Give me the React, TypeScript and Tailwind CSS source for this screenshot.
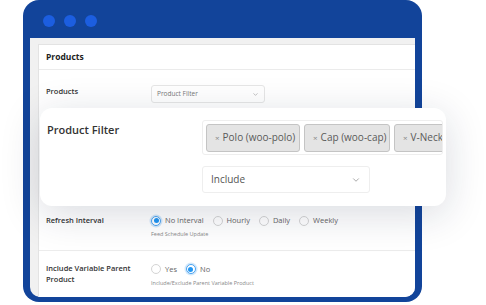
import { ChevronDown } from 'lucide-react';

const font = { fontFamily: '"Open Sans", "Noto Sans", sans-serif' };

function Radio({ checked, label }: { checked?: boolean; label: string }) {
  return (
    <div className="flex items-center gap-[4px]">
      <span
        className={`flex h-[10px] w-[10px] items-center justify-center rounded-full border ${
          checked ? 'border-[#4aa3f0] shadow-[0_0_0_1.5px_rgba(74,163,240,0.25)]' : 'border-[#d4d4d4]'
        } bg-white`}
      >
        {checked && <span className="h-[5px] w-[5px] rounded-full bg-[#2196f3]" />}
      </span>
      <span className="text-[7.5px] text-[#666]">{label}</span>
    </div>
  );
}

function Tag({ label, w }: { label: string; w: string }) {
  return (
    <div
      className={`flex h-[28px] shrink-0 items-center gap-[3px] rounded-[3px] border border-[#c4c4c4] bg-[#e4e4e4] px-[8px] text-[10px] text-[#5a5a5a] ${w}`}
    >
      <span className="text-[8px] text-[#888]">×</span>
      <span className="whitespace-nowrap">{label}</span>
    </div>
  );
}

export default function App() {
  return (
    <div className="relative h-[305px] w-[486px] overflow-hidden bg-white" style={font}>
      {/* Browser frame */}
      <div className="ml-[23px] flex h-[302px] w-[399px] flex-col rounded-[16px] bg-[#12449a]">
        <div className="flex h-[38px] gap-[9px] pl-[20px] pt-[15px]">
          <span className="h-[12px] w-[12px] rounded-full bg-[#1c5ee0]" />
          <span className="h-[12px] w-[12px] rounded-full bg-[#1c5ee0]" />
          <span className="h-[12px] w-[12px] rounded-full bg-[#1c5ee0]" />
        </div>
        <div className="mx-[7px] mb-[5px] flex-1 overflow-hidden rounded-b-[10px] bg-[#f1f1f1] pl-[8px] pt-[6px]">
          <div className="h-full w-[420px] border-l border-t border-[#e3e3e3] bg-white">
            <div className="flex h-[25px] items-center border-b border-[#ebebeb] pl-[7px] text-[8.5px] font-bold text-[#222]">
              Products
            </div>
            {/* Products row */}
            <div className="flex pl-[7px] pt-[15px]">
              <div className="w-[105px] pt-[1px] text-[7.5px] font-semibold text-[#333]">Products</div>
              <div className="flex h-[18px] w-[114px] items-center justify-between rounded-[3px] border border-[#e6e6e6] bg-white px-[5px] text-[6.5px] text-[#777]">
                Product Filter
                <ChevronDown className="h-[7px] w-[7px] text-[#999]" />
              </div>
            </div>
            <div className="h-[112px]" />
            {/* Refresh interval */}
            <div className="flex border-b border-[#ececec] pb-[11px] pl-[7px]">
              <div className="w-[105px] text-[7.5px] font-semibold text-[#333]">Refresh Interval</div>
              <div className="flex flex-col gap-[4px]">
                <div className="flex items-center gap-[9px]">
                  <Radio checked label="No Interval" />
                  <Radio label="Hourly" />
                  <Radio label="Daily" />
                  <Radio label="Weekly" />
                </div>
                <div className="text-[5.5px] text-[#888]">Feed Schedule Update</div>
              </div>
            </div>
            {/* Include variable parent */}
            <div className="flex pl-[7px] pt-[12px]">
              <div className="w-[105px] text-[7.5px] font-semibold leading-[11px] text-[#333]">
                Include Variable Parent
                <br />
                Product
              </div>
              <div className="flex flex-col gap-[4px] pt-[1px]">
                <div className="flex items-center gap-[9px]">
                  <Radio label="Yes" />
                  <Radio checked label="No" />
                </div>
                <div className="text-[5.5px] text-[#888]">Include/Exclude Parent Variable Product</div>
              </div>
            </div>
          </div>
        </div>
      </div>

      {/* Floating Product Filter card */}
      <div className="absolute left-[40px] top-[108px] flex h-[98px] w-[406px] rounded-[12px] bg-white pl-[7px] shadow-[0_8px_40px_rgba(20,30,60,0.16)]">
        <div className="w-[155px] shrink-0 pt-[14px] text-[11px] font-semibold text-[#333]">Product Filter</div>
        <div className="flex min-w-0 flex-1 flex-col gap-[11px] pr-[3px] pt-[12px]">
          <div className="flex h-[35px] items-center gap-[4px] overflow-hidden rounded-[3px] border border-[#eeeeee] pl-[3px]">
            <Tag label="Polo (woo-polo)" w="w-[94px]" />
            <Tag label="Cap (woo-cap)" w="w-[86px]" />
            <Tag label="V-Neck" w="w-[70px]" />
          </div>
          <div className="flex h-[27px] w-[168px] items-center justify-between rounded-[3px] border border-[#eeeeee] px-[8px] text-[10px] text-[#555]">
            Include
            <ChevronDown className="h-[10px] w-[10px] text-[#999]" />
          </div>
        </div>
      </div>
    </div>
  );
}
